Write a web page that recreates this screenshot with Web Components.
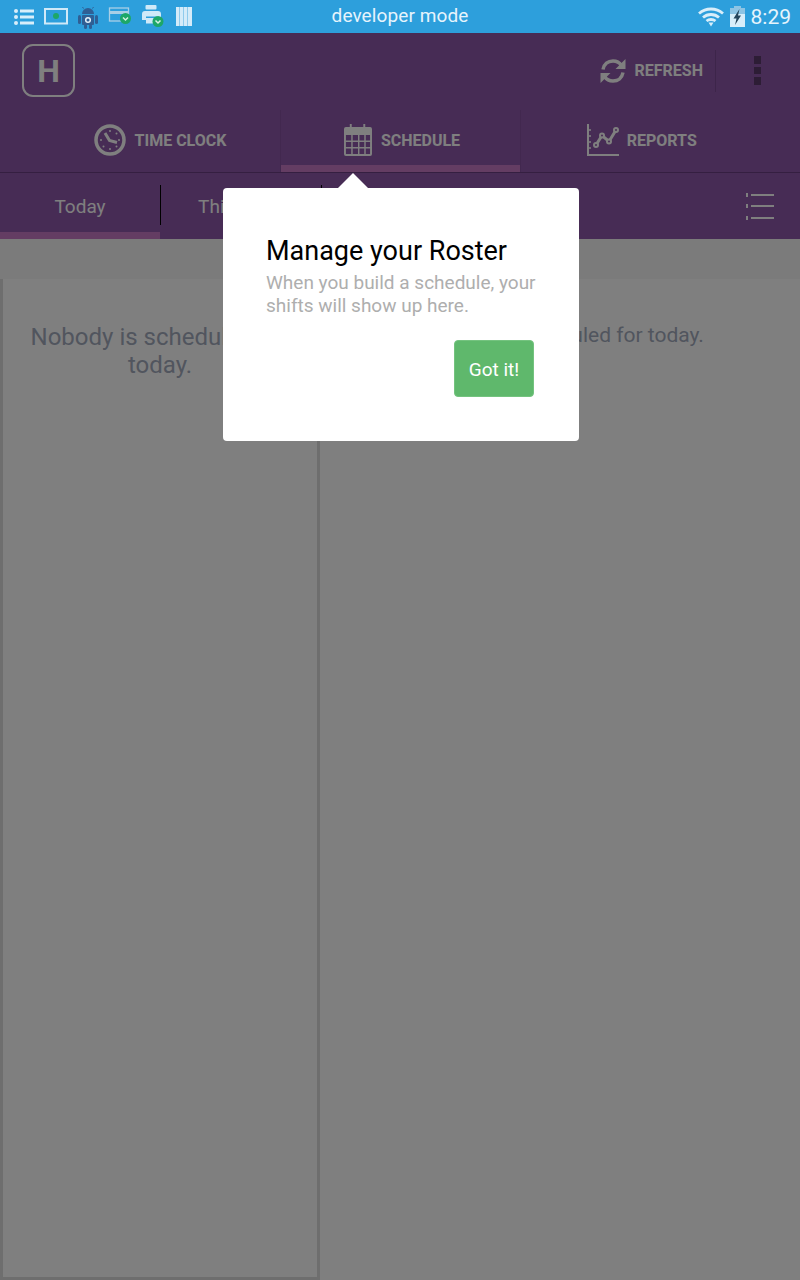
<!DOCTYPE html>
<html>
<head>
<meta charset="utf-8">
<title>Roster</title>
<style>
  html, body { margin: 0; height: 1280px; overflow: hidden; background: #fff; font-family: Roboto, "Liberation Sans", sans-serif; }
</style>
</head>
<body>
<app-shell>
  <status-bar></status-bar>
  <top-bar></top-bar>
  <main-tabs></main-tabs>
  <sub-tabs></sub-tabs>
  <info-strip></info-strip>
  <roster-columns></roster-columns>
  <page-scrim></page-scrim>
  <coach-popover></coach-popover>
</app-shell>

<script>
class Base extends HTMLElement {
  constructor() {
    super()
    this.attachShadow({ mode: 'open' })
    this.shadowRoot.innerHTML = `<style>${this.styles()}</style>${this.html()}`
  }
  styles() { return '' }
  html() { return '<slot></slot>' }
}

var icons = {
  list: `<svg width="20" height="16" viewBox="0 0 20 16" fill="#d8eefa"><circle cx="2" cy="2" r="2"/><circle cx="2" cy="8" r="2"/><circle cx="2" cy="14" r="2"/><rect x="6" y="0.5" width="14" height="3"/><rect x="6" y="6.5" width="14" height="3"/><rect x="6" y="12.5" width="14" height="3"/></svg>`,
  screen: `<svg width="24" height="17" viewBox="0 0 24 17"><rect x="1" y="1" width="22" height="14.5" fill="none" stroke="#cfe9f8" stroke-width="2"/><circle cx="12" cy="8" r="3" fill="#1da768"/></svg>`,
  android: `<svg width="20" height="24" viewBox="0 0 20 24" fill="#2f5f94"><path d="M4 9a6 6 0 0 1 12 0z"/><path d="M5.5 3.5 4.5 2M14.500 3.500 15.500 2" stroke="#2f5f94"/><rect x="4" y="10" width="12" height="10" rx="1"/><rect x="0" y="10" width="3" height="9" rx="1.500"/><rect x="17" y="10" width="3" height="9" rx="1.500"/><rect x="6" y="19" width="3" height="5" rx="1.500"/><rect x="11" y="19" width="3" height="5" rx="1.500"/><circle cx="10" cy="15" r="2.300" fill="none" stroke="#e4f0f8" stroke-width="1.500"/></svg>`,
  card: `<svg width="24" height="20" viewBox="0 0 24 20"><rect x="1.500" y="1" width="19" height="13" fill="none" stroke="#a9cfe6" stroke-width="1.300"/><rect x="1.500" y="4" width="19" height="3" fill="#a9cfe6"/><circle cx="17.500" cy="11.500" r="5.500" fill="#1da768"/><path d="M15 10.500l2.500 2.500 2.500-2.500" fill="none" stroke="#d5f2e4" stroke-width="1.500"/></svg>`,
  printer: `<svg width="24" height="24" viewBox="0 0 24 24"><rect x="3.500" y="0" width="11" height="4.500" rx="1" fill="#cfe9f8"/><path d="M0 9a3 3 0 0 1 3-3h13a3 3 0 0 1 3 3v6H15V11.500H4V15H0z" fill="#cfe9f8"/><rect x="4" y="13" width="10" height="5.500" fill="#cfe9f8"/><circle cx="16" cy="16.500" r="5.500" fill="#1da768"/><path d="M13.500 15.500l2.500 2.500 2.500-2.500" fill="none" stroke="#d5f2e4" stroke-width="1.500"/></svg>`,
  barcode: `<svg width="16" height="19" viewBox="0 0 16 19"><rect width="16" height="19" fill="#d4ebf9"/><path d="M3.500 0v19M7.500 0v19M11.500 0v19" stroke="#8fcaec" stroke-width="1"/></svg>`,
  wifi: `<svg width="26" height="20" viewBox="0 0 26 20" fill="none" stroke="#d8eefa" stroke-width="2.800"><path d="M1 6.500c7-6 17-6 24 0"/><path d="M5 10.500c4.500-4 11.500-4 16 0"/><path d="M8.500 14c2.500-2 6.500-2 9 0"/><path d="M10.500 15.500h5l-2.500 4z" fill="#d8eefa" stroke="none"/></svg>`,
  battery: `<svg width="15" height="21" viewBox="0 0 15 21"><rect x="4" y="0" width="7" height="2" fill="#8dc4e4"/><rect x="0" y="2" width="15" height="19" fill="#d8eefa"/><rect x="0" y="2" width="15" height="6" fill="#8dc4e4"/><path d="M9.500 3 3.500 12.500h3L5 19l6-9.500H8z" fill="#26465c"/></svg>`,
  refresh: `<svg width="26" height="28" viewBox="0 0 26 28" fill="none" stroke="#fff" stroke-width="3.500"><path d="M3 12.500C4 7 8 4 13 4c3.500 0 6.500 1.500 8.500 4.500"/><path d="M23 15.500C22 21 18 24 13 24c-3.500 0-6.500-1.500-8.500-4.500"/><path d="M25.500 2v10h-10z" fill="#fff" stroke="none"/><path d="M0.500 26V16h10z" fill="#fff" stroke="none"/></svg>`,
  clock: `<svg width="32" height="32" viewBox="0 0 32 32" fill="none" stroke="#fff"><circle cx="16" cy="16" r="14" stroke-width="3.500"/><path d="M11 9 15.500 16.500 23 18.500" stroke-width="3"/><g fill="#fff" stroke="none"><circle cx="16" cy="7" r="1"/><circle cx="16" cy="25" r="1"/><circle cx="7" cy="16" r="1"/><circle cx="25" cy="16" r="1"/><circle cx="22.500" cy="9.500" r="1"/><circle cx="9.500" cy="22.500" r="1"/><circle cx="22.500" cy="22.500" r="1"/></g></svg>`,
  calendar: `<svg width="28" height="32" viewBox="0 0 29 32" preserveAspectRatio="none" fill="#fff"><path fill-rule="evenodd" d="M2 3h25a2 2 0 0 1 2 2v25a2 2 0 0 1-2 2H2a2 2 0 0 1-2-2V5a2 2 0 0 1 2-2zM2 11v5.500h5.500V11zm7 0v5.500h5.500V11zm7 0v5.500h5V11zm6.500 0v5.500H27V11zM2 18v5h5.500v-5zm7 0v5h5.500v-5zm7 0v5h5v-5zm6.500 0v5H27v-5zM2 24.500V30h5.500v-5.500zm7 0V30h5.500v-5.500zm7 0V30h5v-5.500zm6.500 0V30H27v-5.500z"/><rect x="6" y="0" width="2" height="6"/><rect x="20" y="0" width="2" height="6"/></svg>`,
  chart: `<svg width="32" height="32" viewBox="0 0 32 32" fill="none" stroke="#fff"><path d="M1 0v31h31" stroke-width="2"/><path d="M2 6h2M2 12h2M2 18h2M2 24h2" stroke-width="1.500"/><path d="M9 21 15 11.500 22 17.500 29 6" stroke-width="3"/><g stroke-width="2" fill="#8e58aa"><circle cx="9" cy="21" r="2"/><circle cx="15" cy="11.500" r="2"/><circle cx="22" cy="17.500" r="2"/><circle cx="29" cy="6" r="2"/></g></svg>`,
  menu: `<svg width="28" height="28" viewBox="0 0 28 28" fill="#fff"><rect x="0" y="1" width="2" height="4"/><rect x="5" y="2" width="23" height="2"/><rect x="0" y="12" width="2" height="4"/><rect x="5" y="13" width="23" height="2"/><rect x="0" y="24" width="2" height="4"/><rect x="5" y="25" width="23" height="2"/></svg>`
}

class AppShell extends Base {
  styles() {
    return `:host { display: flex; flex-direction: column; position: relative; width: 800px; height: 1280px; overflow: hidden; }`
  }
}

class StatusBar extends Base {
  styles() {
    return `
      :host { display: grid; grid-template-columns: 1fr auto 1fr; align-items: center; height: 33px; background: #2d9fdc; color: #e6f4fc; }
      .left { display: flex; align-items: center; gap: 10px; padding-left: 14px; }
      .left svg { display: block; }
      .title { font-size: 19px; letter-spacing: 0.1px; padding-bottom: 2px; }
      .right { display: flex; align-items: center; justify-content: flex-end; gap: 6px; padding-right: 9px; }
      .right svg { display: block; }
      .time { font-size: 21px; }
    `
  }
  html() {
    return `
      <div class="left">${icons.list}${icons.screen}${icons.android}${icons.card}${icons.printer}${icons.barcode}</div>
      <div class="title">developer mode</div>
      <div class="right">${icons.wifi}${icons.battery}<span class="time">8:29</span></div>
    `
  }
}

class TopBar extends Base {
  styles() {
    return `
      :host { display: flex; align-items: center; height: 77px; background: #8e58aa; color: #fff; padding: 0 39px 2px 22px; box-sizing: border-box; }
      .logo { box-sizing: border-box; width: 53px; height: 53px; border: 2.500px solid #fff; border-radius: 11px; display: flex; align-items: center; justify-content: center; font-size: 32px; font-weight: 700; }
      .refresh { margin-left: auto; display: flex; align-items: center; gap: 9px; font-size: 16px; font-weight: 700; height: 42px; padding-right: 12px; border-right: 1px solid #7b4b95; }
      .refresh svg { display: block; }
      .dots { margin-left: 38px; display: flex; flex-direction: column; gap: 3px; }
      .dots i { display: block; width: 7px; height: 7.500px; background: #5a3b6b; }
    `
  }
  html() {
    return `
      <div class="logo">H</div>
      <div class="refresh">${icons.refresh}<span>REFRESH</span></div>
      <div class="dots"><i></i><i></i><i></i></div>
    `
  }
}

class MainTabs extends Base {
  styles() {
    return `
      :host { display: grid; grid-template-columns: repeat(3, 240px); height: 63px; padding: 0 39px 0 41px; background: #8e58aa; border-bottom: 1px solid #6b3f83; box-sizing: border-box; color: #fff; }
      .tab { display: flex; align-items: center; justify-content: center; gap: 9px; font-size: 16px; font-weight: 700; box-sizing: border-box; padding-top: 5px; border-bottom: 7px solid transparent; height: 62px; }
      .tab svg { display: block; }
      .tab.on { border-bottom-color: #c87ac6; padding-left: 2px; }
      .tab.first { padding-right: 2px; }
      .tab.last { gap: 8px; padding-left: 1.500px; }
      .tab + .tab { box-shadow: -1px 0 0 #85509f; }
    `
  }
  html() {
    return `
      <div class="tab first">${icons.clock}<span>TIME CLOCK</span></div>
      <div class="tab on">${icons.calendar}<span>SCHEDULE</span></div>
      <div class="tab last">${icons.chart}<span>REPORTS</span></div>
    `
  }
}

class SubTabs extends Base {
  styles() {
    return `
      :host { display: flex; height: 66px; background: #8e58aa; color: #fff; position: relative; }
      .tab { position: relative; display: flex; align-items: center; justify-content: center; width: 160.500px; box-sizing: border-box; font-size: 19px; border-bottom: 7px solid transparent; padding-top: 7px; }
      .tab.on { border-bottom-color: #c87ac6; width: 160px; }
      .tab.sep::after { content: ''; position: absolute; right: -1px; top: 12px; width: 1px; height: 40px; background: #000; }
      .tab.week { padding-left: 3px; }
      .menu { margin-left: auto; margin-right: 26px; align-self: center; }
      .menu svg { display: block; }
    `
  }
  html() {
    return `
      <div class="tab on sep">Today</div>
      <div class="tab sep week">This Week</div>
      <div class="tab">Next Week</div>
      <div class="menu">${icons.menu}</div>
    `
  }
}

class InfoStrip extends Base {
  styles() {
    return `:host { display: block; height: 40px; background: #f6f6f6; }`
  }
  html() { return '' }
}

class RosterColumns extends Base {
  styles() {
    return `
      :host { display: grid; grid-template-columns: 320px 480px; flex: 1; background: #fff; color: #a3abbd; text-align: center; }
      .col { box-sizing: border-box; }
      .people { border: 3px solid #dcdcdc; border-top: 0; padding: 44px 12px 0; font-size: 24px; line-height: 28px; }
      .shifts { padding-top: 44px; font-size: 21px; line-height: 24px; }
    `
  }
  html() {
    return `
      <div class="col people">Nobody is scheduled for today.</div>
      <div class="col shifts">Nobody is scheduled for today.</div>
    `
  }
}

class PageScrim extends Base {
  styles() {
    return `:host { position: absolute; left: 0; right: 0; top: 33px; bottom: 0; background: rgba(0, 0, 0, 0.5); }`
  }
  html() { return '' }
}

class CoachPopover extends Base {
  styles() {
    return `
      :host { position: absolute; left: 223px; top: 188px; width: 356px; height: 253px; box-sizing: border-box; background: #fff; border-radius: 4px; padding: 47px 45px 0 43px; display: flex; flex-direction: column; }
      .arrow { position: absolute; left: 115px; top: -15px; width: 0; height: 0; border-left: 15px solid transparent; border-right: 15px solid transparent; border-bottom: 15px solid #fff; }
      h2 { margin: 0; font-size: 27px; line-height: 32px; font-weight: 400; color: #000; }
      p { margin: 4px -10px 0 0; font-size: 19px; line-height: 23px; color: #aeaeae; }
      .actions { display: flex; justify-content: flex-end; margin-top: 23px; }
      button { width: 80px; height: 57px; border: 1px solid #74c37f; border-radius: 4px; background: #5fb86c; color: #fff; font: 400 19px Roboto, "Liberation Sans", sans-serif; padding: 1px 0 0; }
    `
  }
  html() {
    return `
      <div class="arrow"></div>
      <h2>Manage your Roster</h2>
      <p>When you build a schedule, your shifts will show up here.</p>
      <div class="actions"><button>Got it!</button></div>
    `
  }
}

customElements.define('app-shell', AppShell)
customElements.define('status-bar', StatusBar)
customElements.define('top-bar', TopBar)
customElements.define('main-tabs', MainTabs)
customElements.define('sub-tabs', SubTabs)
customElements.define('info-strip', InfoStrip)
customElements.define('roster-columns', RosterColumns)
customElements.define('page-scrim', PageScrim)
customElements.define('coach-popover', CoachPopover)
</script>
</body>
</html>
